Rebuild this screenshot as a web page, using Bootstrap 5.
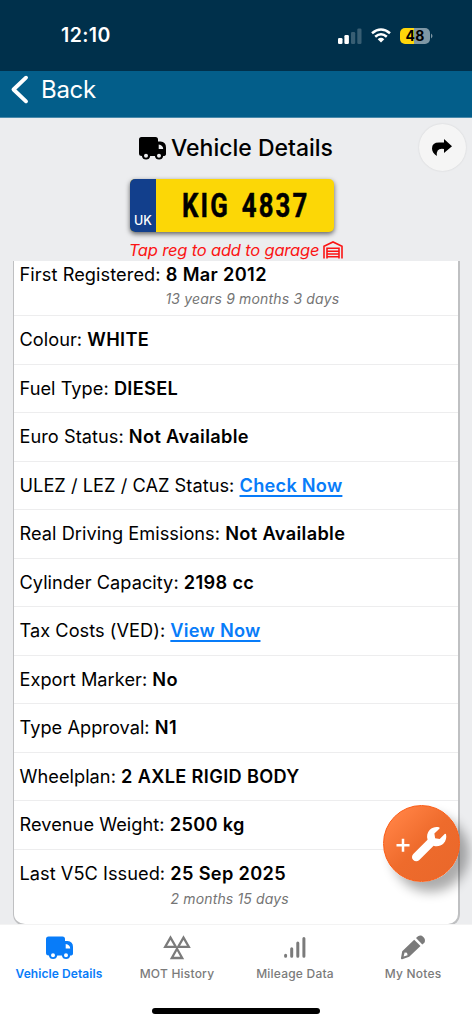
<!DOCTYPE html>
<html lang="en">
<head>
<meta charset="utf-8">
<meta name="viewport" content="width=device-width, initial-scale=1">
<title>Vehicle Details</title>
<link rel="stylesheet" href="https://cdn.jsdelivr.net/npm/bootstrap@5.3.0/dist/css/bootstrap.min.css">
<style>
body{font-family:Inter,"Liberation Sans",sans-serif;background:#ecedef;color:#000;height:1024px;overflow:hidden}
svg{display:block;flex:none}
.status{height:71px;background:#00304b;color:#fff}
.clock{font-size:19.5px;font-weight:600;line-height:71px;padding:0 0 0 61px;letter-spacing:.4px}
.status-icons{padding-right:39px}
.batt{width:30px;height:16px;margin-left:9px;border-radius:5px;background:linear-gradient(90deg,#ffd60a 48%,#7f97a5 48%);color:#000;font-size:14px;font-weight:700;line-height:16px;text-align:center;letter-spacing:.3px}
.backbar{height:47px;background:#035e8a;color:#fff;border-bottom:1px solid #4a8aab}
.chevron{margin:3px 0 0 10px}
.back-text{font-size:24px;line-height:38px;font-weight:400;margin-left:12px;letter-spacing:-.3px}
.top-area{height:143px}
.page-title{font-size:23px;font-weight:500;line-height:30px;margin:15px 0 0;letter-spacing:0}
.title-truck{margin-right:5px}
.plate{width:204px;height:53px;margin:16px 8px 0 0;border-radius:5px;background:#fcd706;box-shadow:0 2px 5px rgba(0,0,0,.6);overflow:hidden}
.plate-uk{width:26px;background:#123f8c;color:#fff;font-size:12.5px;font-weight:500;line-height:22px;letter-spacing:.2px}
.plate-no{font:700 33px/54px Roboto,sans-serif;letter-spacing:2.8px;word-spacing:4px;transform:scaleX(.78);white-space:pre;-webkit-text-stroke:.5px #000;padding-left:2px}
.hint{color:#fb1414;font-size:16.5px;font-style:italic;line-height:20px;margin-top:8px;letter-spacing:-.18px}
.share-btn{width:47px;height:47px;right:6.5px;top:6px;background:#f5f5f5;box-shadow:0 0 2px rgba(0,0,0,.12)}
.scroller{height:663px;overflow:hidden;padding:0 12px 0 13px}
.details{background:#fff;border:solid #bfc0c2;border-width:0 2px 2px 1.5px;border-radius:0 0 12px 12px;height:665px}
.item{height:48.5px;border-bottom:1px solid #ededee;padding-left:5.5px;font-size:18.2px;line-height:47px;letter-spacing:.04px;white-space:nowrap}
.item b{font-weight:600;letter-spacing:.34px}
.item a{color:#087cf9;font-weight:600;letter-spacing:.24px;text-decoration-thickness:1.5px;text-underline-offset:2.5px}
.item.first{height:55px;line-height:26px}
.item.first span{letter-spacing:.08px}
.item.last{height:75px;border:0}
.item small{display:block;font-size:14px;line-height:18px;font-style:italic;color:#757575}
.item.first small{padding-left:146px;margin-top:3px;letter-spacing:.17px}
.item.last small{padding-left:151px;margin-top:-7px;letter-spacing:.15px}
.tabs{height:100px;background:#fff;border-top:1px solid #f3f3f3;color:#7b7b7b;font-size:12px;font-weight:500;letter-spacing:.22px}
.tab{height:60px;padding-top:9px;white-space:nowrap}
.tab svg{height:28px}
.tab span{line-height:20px;margin-top:2px}
.tab.on{color:#087cf9;font-weight:600;letter-spacing:.08px}
.home{width:168px;height:6px;border-radius:3px;background:#000;margin:23px auto 0}
.fab{width:77px;height:77px;right:12px;top:805px;border:1.5px solid #fb5a12;background:linear-gradient(135deg,#ff8042 15%,#ee6b2c 50%,#e9672a);box-shadow:9px 10px 12px rgba(0,0,0,.33)}
</style>
</head>
<body>
<header>
 <div class="status d-flex justify-content-between align-items-center">
  <div class="clock">12:10</div>
  <div class="status-icons d-flex align-items-center">
   <svg width="25" height="16" viewBox="0 0 25 16" fill="#fff"><rect x="0" y="10" width="4.5" height="6" rx="1.3"/><rect x="6.4" y="7" width="4.5" height="9" rx="1.3"/><g opacity=".22"><rect x="13" y="4" width="4.2" height="12" rx="1.3"/><rect x="19.3" y="0.5" width="4.2" height="15.5" rx="1.3"/></g></svg>
   <svg class="ms-2" width="20" height="15" viewBox="0 0 20 15" fill="none" stroke="#fff" stroke-width="2.6"><path d="M1 5.2Q10-2.2 19 5.2M4.2 8.7Q10 3.8 15.8 8.7"/><path d="M10 14.6 6.7 11.2Q10 8.4 13.3 11.2Z" fill="#fff" stroke="none"/></svg>
   <div class="batt">48</div>
   <svg width="3" height="6" viewBox="0 0 3 6"><path d="M1 .5Q4 3 1 5.5Z" fill="#7f97a5"/></svg>
  </div>
 </div>
 <nav class="backbar d-flex align-items-start">
  <svg class="chevron" width="19" height="31" viewBox="0 0 19 31" fill="none" stroke="#fff" stroke-width="3.9" stroke-linecap="round" stroke-linejoin="round"><path d="M16 3.7 3.5 15.5 16 27.3"/></svg>
  <span class="back-text">Back</span>
 </nav>
</header>

<svg width="0" height="0" class="position-absolute">
 <symbol id="truck" viewBox="0 0 27 23"><path fill="currentColor" fill-rule="evenodd" d="M2.5 0H16.5Q19 0 19 2.5V4.5H21.5Q27 5 27 10.5V17Q27 19 24.2 19A4.2 4.2 0 0 1 15.9 19H11.2A4.2 4.2 0 0 1 2.9 19Q0 19 0 16.5V2.5Q0 0 2.5 0ZM19.7 7.5V12H24.2Q24 8 19.7 7.5ZM7 16.7A2 2 0 1 0 7 20.7 2 2 0 1 0 7 16.7ZM20 16.7A2 2 0 1 0 20 20.7 2 2 0 1 0 20 16.7Z"/></symbol>
</svg>

<section class="top-area position-relative d-flex flex-column align-items-center">
 <h1 class="page-title d-flex align-items-center"><svg class="title-truck" width="27" height="23"><use href="#truck"/></svg><span>Vehicle Details</span></h1>
 <div class="plate d-flex">
  <div class="plate-uk d-flex align-items-end justify-content-center">UK</div>
  <div class="plate-no flex-fill text-center">KIG 4837</div>
 </div>
 <div class="hint d-flex align-items-center"><span>Tap reg to add to garage</span>
  <svg class="ms-1" width="20" height="18" viewBox="0 0 20 18" fill="none" stroke="#fb1414" stroke-width="1.6"><path d="M1 17.5V5.2L10 1l9 4.2v12.3M4 17.5V7.3h12v10.2M4.5 10.2h11M4.5 13h11M4.5 15.8h11"/></svg>
 </div>
 <button class="share-btn btn rounded-circle border-0 p-0 position-absolute d-flex align-items-center justify-content-center"><svg width="20" height="19" viewBox="0 0 20 19"><path d="M12 1 20 8.2 12 15V11Q4 9.5 4.8 18 0 14.5 0 10.5 0 4.6 7 4.6H12Z"/></svg></button>
</section>

<main class="scroller">
 <div class="details">
  <div class="item first"><span>First Registered: <b>8 Mar 2012</b></span><small>13 years 9 months 3 days</small></div>
  <div class="item"><span>Colour: <b>WHITE</b></span></div>
  <div class="item"><span>Fuel Type: <b>DIESEL</b></span></div>
  <div class="item"><span>Euro Status: <b>Not Available</b></span></div>
  <div class="item"><span>ULEZ / LEZ / CAZ Status: <a href="#">Check Now</a></span></div>
  <div class="item"><span>Real Driving Emissions: <b>Not Available</b></span></div>
  <div class="item"><span>Cylinder Capacity: <b>2198 cc</b></span></div>
  <div class="item"><span>Tax Costs (VED): <a href="#">View Now</a></span></div>
  <div class="item"><span>Export Marker: <b>No</b></span></div>
  <div class="item"><span>Type Approval: <b>N1</b></span></div>
  <div class="item"><span>Wheelplan: <b>2 AXLE RIGID BODY</b></span></div>
  <div class="item"><span>Revenue Weight: <b>2500 kg</b></span></div>
  <div class="item last"><span>Last V5C Issued: <b>25 Sep 2025</b></span><small>2 months 15 days</small></div>
 </div>
</main>

<footer class="tabs">
 <div class="row g-0 text-center">
  <div class="col tab on d-flex flex-column align-items-center"><svg width="27" class="me-0"><use href="#truck"/></svg><span>Vehicle Details</span></div>
  <div class="col tab d-flex flex-column align-items-center"><svg width="28" viewBox="0 0 28 28" fill="none" stroke="currentColor" stroke-width="2.3"><path d="M7.5 3.6 2.2 12.8H12.8ZM20.5 3.6 15.2 12.8H25.8ZM14 14.8 8.8 24H19.2Z"/></svg><span>MOT History</span></div>
  <div class="col tab d-flex flex-column align-items-center"><svg width="24" viewBox="0 0 24 28" stroke="currentColor" stroke-width="3" stroke-linecap="round"><path d="M2.6 21.2v1M8.7 14.8v7.4M14.8 9v13.2M20.9 4.4v17.8"/></svg><span>Mileage Data</span></div>
  <div class="col tab d-flex flex-column align-items-center"><svg width="26" viewBox="0 0 26 28" fill="currentColor"><path fill-rule="evenodd" d="M14.2 5.7 20.5 12 9.2 22.8 2.2 25.2Q.8 25.4 1 24L2.2 17.2ZM4.6 18.6 3.6 22.5 7.6 21.2 7 18.8Z"/><path d="M16 4 18 2.3Q20.8.4 23.3 2.9 26 5.5 24.4 8.7L22.3 10.5Z"/></svg><span>My Notes</span></div>
 </div>
 <div class="home"></div>
</footer>

<button class="fab btn rounded-circle p-0 position-absolute d-flex align-items-center justify-content-center">
 <svg width="54" height="40" viewBox="0 0 54 40"><path d="M1.5 21.3H14.5M8 14.8V27.8" stroke="#fff" stroke-width="2.5"/><path transform="translate(17 3) scale(.067)" fill="#fff" d="M507.73 109.1c-2.24-9.03-13.54-12.09-20.12-5.51l-74.36 74.36-67.88-11.31-11.31-67.88 74.36-74.36c6.62-6.62 3.43-17.9-5.66-20.16-47.38-11.74-99.55.91-136.58 37.93-39.64 39.64-50.55 97.1-34.05 147.2L18.74 402.76c-24.99 24.99-24.99 65.51 0 90.5 24.99 24.99 65.51 24.99 90.5 0l213.21-213.21c50.12 16.71 107.47 5.68 147.37-34.22 37.07-37.07 49.7-89.32 37.91-136.73z"/></svg>
</button>
<script src="https://cdn.jsdelivr.net/npm/bootstrap@5.3.0/dist/js/bootstrap.bundle.min.js"></script>
</body>
</html>
